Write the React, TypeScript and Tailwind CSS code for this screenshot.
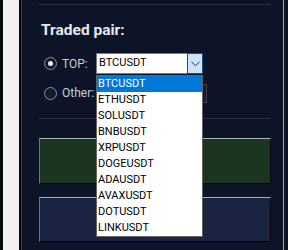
const pairs = [
  "BTCUSDT",
  "ETHUSDT",
  "SOLUSDT",
  "BNBUSDT",
  "XRPUSDT",
  "DOGEUSDT",
  "ADAUSDT",
  "AVAXUSDT",
  "DOTUSDT",
  "LINKUSDT",
];

const Radio = ({ checked }: { checked?: boolean }) => (
  <div className="ml-[5px] flex size-[13px] items-center justify-center rounded-full border border-[#8a909c] bg-[#141b2d]">
    {checked && <div className="size-[5px] rounded-full bg-[#e8ebf0]" />}
  </div>
);

const App = () => {
  return (
    <div className="flex h-[250px] w-[288px] overflow-hidden bg-[#0c1222] font-['Roboto',sans-serif]">
      <div className="w-[3px] bg-[#040808]" />
      <div className="w-[16px] bg-[#f0f0f0]" />
      <div className="w-[2px] bg-[#05080d]" />
      <div className="w-px bg-[#343b4b]" />

      <div className="relative flex flex-1 flex-col bg-[#0d1427] pl-[17px] pr-[12px]">
        <div className="h-[4px]" />
        <div className="h-px bg-[#252d40]" />

        <div className="mt-[16px] ml-[2px] h-[18px] text-[15.5px] leading-[18px] font-bold text-[#e6e9ef]">
          Traded pair:
        </div>

        <div className="mt-[14px] flex h-[21px] items-center">
          <Radio checked />
          <span className="ml-[5px] w-[34px] text-[12px] text-[#c8ccd4]">TOP:</span>
          <div className="flex h-[21px] w-[107px] items-center border border-[#7a7a7a] bg-white">
            <span className="flex-1 pl-[2px] text-[11px] text-black">BTCUSDT</span>
            <div className="-mr-px flex h-[21px] w-[16px] items-center justify-center border border-[#1b4f86] bg-[#cce4f7]">
              <svg width="9" height="6" viewBox="0 0 9 6" fill="none">
                <path d="M0.5 0.8 L4.5 4.8 L8.5 0.8" stroke="#2b2b2b" strokeWidth="1" />
              </svg>
            </div>
          </div>
        </div>

        <div className="mt-[9px] flex h-[20px] items-center">
          <Radio />
          <span className="ml-[5px] w-[34px] text-[12px] text-[#c8ccd4]">Other:</span>
          <div className="h-[19px] w-[111px] border border-[#3a4152] bg-[#151c2e]" />
        </div>

        <div className="mt-[15px] h-px bg-[#252d40]" />

        <div className="mt-[19px] h-[46px] border border-t-[#a9b0bc] border-l-[#6e7684] border-r-[#05080c] border-b-[#05080c] bg-[#1c3520]" />
        <div className="mt-[13px] h-[45px] border border-t-[#a9b0bc] border-l-[#6e7684] border-r-[#05080c] border-b-[#05080c] bg-[#1a2440]" />

        <div className="absolute left-[74px] top-[75px] w-[107px] border border-[#646464] bg-white">
          {pairs.map((p, i) => (
            <div
              key={p}
              className={
                i === 0
                  ? "h-[16px] bg-[#0078d7] pl-px text-[11px] leading-[16px] text-white"
                  : "h-[16px] pl-px text-[11px] leading-[16px] text-black"
              }
            >
              {p}
            </div>
          ))}
        </div>
      </div>

      <div className="w-px bg-[#a3abb9]" />
      <div className="w-[4px] bg-[#0e1424]" />
    </div>
  );
};

export default App;
